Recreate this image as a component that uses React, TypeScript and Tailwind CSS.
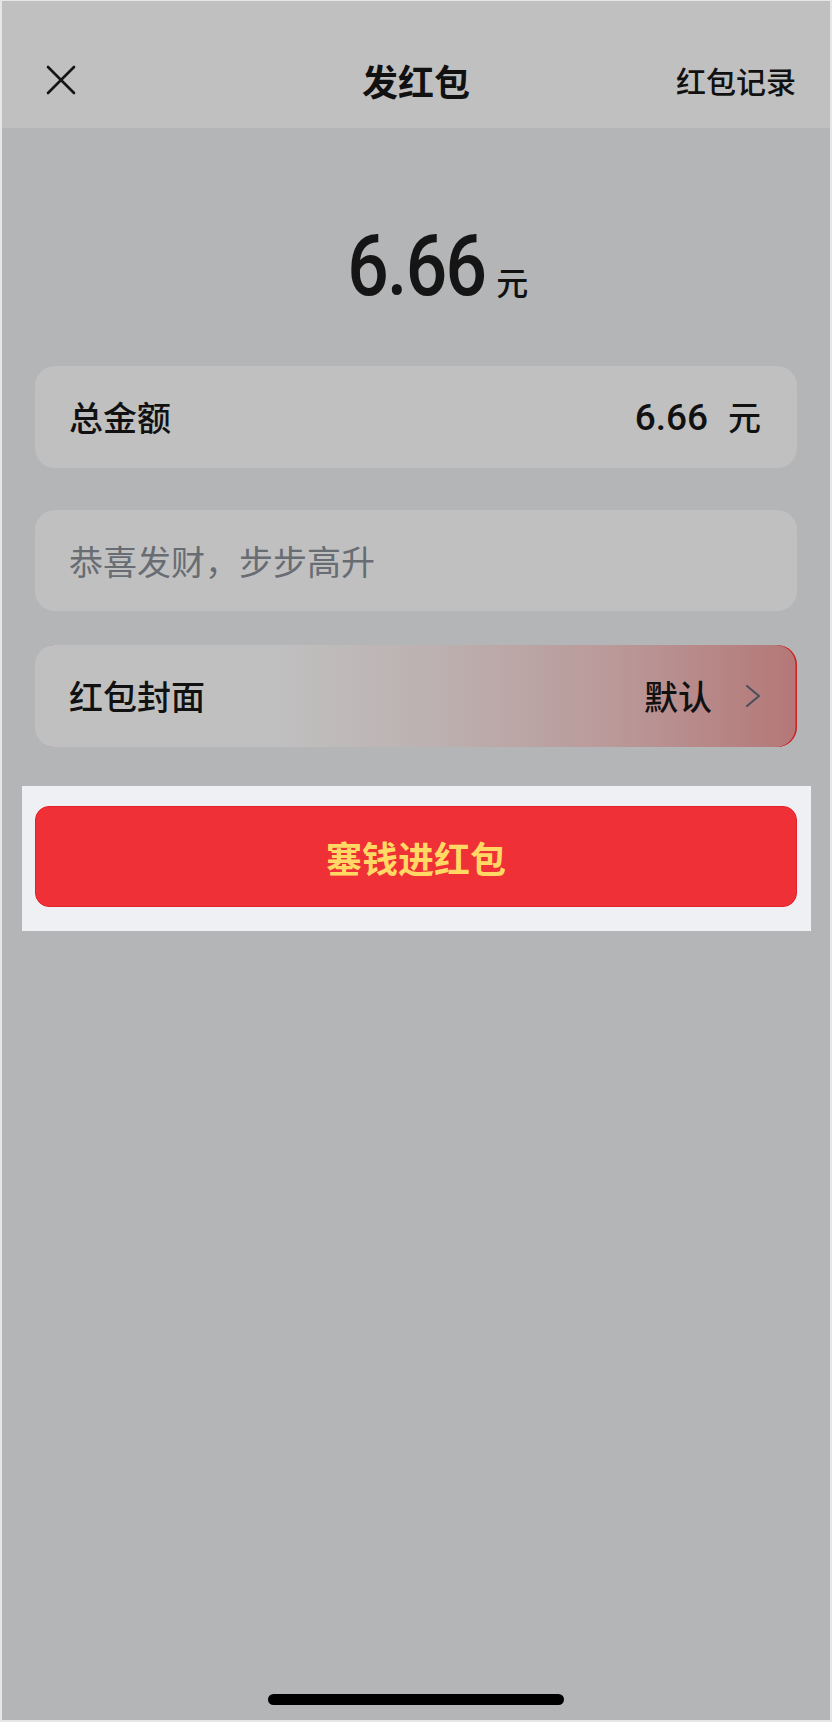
import React from "react";

const CJK = { fontFamily: '"Noto Sans CJK SC", "Noto Sans", sans-serif' };
const NUM = { fontFamily: 'Roboto, "Noto Sans", sans-serif' };

export default function App() {
  return (
    <div
      className="w-[832px] h-[1722px] flex flex-col bg-[#b4b5b7] border-t border-l-2 border-r-2 border-b-2 border-[#e6e6e6] text-[#111111]"
      style={CJK}
    >
      <header className="h-[127px] bg-[#c0c0c0] flex flex-col justify-end pb-[7px]">
        <div className="h-[82px] grid grid-cols-[1fr_auto_1fr] items-center px-[34px]">
          <div className="flex items-center pl-[10px]">
            <svg width="30" height="30" viewBox="0 0 30 30" fill="none">
              <path d="M2 2 L28 28 M28 2 L2 28" stroke="#141414" strokeWidth="2.6" strokeLinecap="round" />
            </svg>
          </div>
          <div className="text-[36px] font-bold leading-none">发红包</div>
          <div className="justify-self-end text-[30px] font-medium leading-none">红包记录</div>
        </div>
      </header>

      <main className="flex-1 flex flex-col px-[33px]">
        <div className="h-[238px] grid grid-cols-[1fr_auto_1fr] items-baseline pt-[96px]">
          <span />
          <span
            className="inline-block scale-x-[0.86] text-[85px] leading-none font-medium tracking-[-2px] text-[#151515]"
            style={NUM}
          >
            6.66
          </span>
          <span className="ml-[0px] text-[32px] leading-none font-medium">元</span>
        </div>

        <div className="h-[102px] rounded-[20px] bg-[#c0c0c0] flex items-center justify-between pl-[34px] pr-[36px]">
          <span className="text-[34px] font-medium leading-none">总金额</span>
          <span className="flex items-baseline">
            <span className="text-[37px] font-medium leading-none" style={NUM}>
              6.66
            </span>
            <span className="ml-[20px] text-[33px] font-medium leading-none">元</span>
          </span>
        </div>

        <div className="mt-[42px] h-[101px] rounded-[20px] bg-[#c0c0c0] flex items-center pl-[34px] pr-[36px]">
          <span className="text-[34px] leading-none text-[#686c73]">恭喜发财，步步高升</span>
        </div>

        <div className="mt-[34px] h-[102px] rounded-[20px] bg-[linear-gradient(90deg,#c0c0c0_0%,#c0c0c0_31%,#bdb1b1_52%,#ba9999_76%,#b57777_100%)] shadow-[inset_-1.5px_0_0_#cf1f22] flex items-center justify-between pl-[34px] pr-[36px]">
          <span className="text-[34px] font-medium leading-none">红包封面</span>
          <span className="flex items-center">
            <span className="text-[34px] font-medium leading-none">默认</span>
            <svg className="ml-[33px]" width="16" height="24" viewBox="0 0 16 24" fill="none">
              <path d="M2 2 L14 12 L2 22" stroke="#4a515a" strokeWidth="2.2" strokeLinecap="round" strokeLinejoin="round" />
            </svg>
          </span>
        </div>

        <div className="mt-[39px] ml-[-13px] mr-[-14px] bg-[#eef0f4] pt-[20px] pb-[24px] pl-[13px] pr-[14px]">
          <button className="w-full h-[101px] rounded-[14px] bg-[#ef3036] border border-[#e6202a] flex items-center justify-center">
            <span className="text-[36px] font-semibold leading-none text-[#ffd964]">塞钱进红包</span>
          </button>
        </div>

        <div className="mt-auto mb-[15px] flex justify-center">
          <div className="w-[296px] h-[11px] rounded-full bg-black" />
        </div>
      </main>
    </div>
  );
}
